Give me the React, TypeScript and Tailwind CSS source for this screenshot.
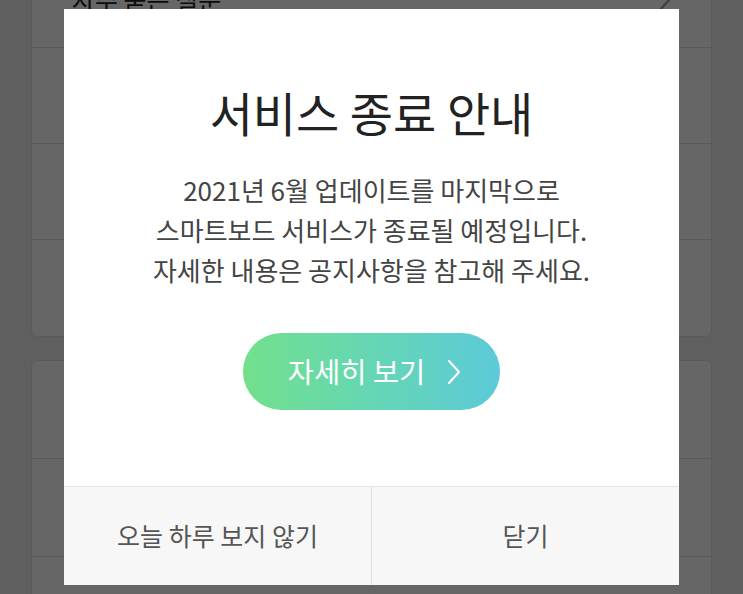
const topRows = ['자주 묻는 질문', '이용 안내', '문의하기', '버전 정보'];
const bottomRows = ['알림 설정', '이용약관', '프라이버시 정책'];

function Chevron({ className }: { className?: string }) {
  return (
    <svg viewBox="0 0 14 28" className={className} fill="none" stroke="currentColor" strokeWidth={2} strokeLinecap="round" strokeLinejoin="round">
      <polyline points="2,3 12,14 2,25" />
    </svg>
  );
}

function Row({ label, tall }: { label: string; tall?: boolean }) {
  return (
    <div
      className={`flex items-center justify-between border-b border-[#e2e2e2] pl-[40px] pr-[40px] last:border-b-0 ${
        tall ? 'h-[98px]' : 'h-[96px]'
      }`}
    >
      <span className="text-[25px] text-[#222]">{label}</span>
      <Chevron className="h-[28px] w-[14px] text-[#999]" />
    </div>
  );
}

export default function App() {
  return (
    <div
      className="relative h-[594px] w-[743px] overflow-hidden bg-[#eeeeee]"
      style={{ fontFamily: '"Noto Sans CJK KR", "Noto Sans", sans-serif' }}
    >
      {/* Page behind the dialog */}
      <div className="mt-[-49px] flex flex-col gap-[23px] px-[31px]">
        <div className="rounded-md border border-[#e2e2e2] bg-white">
          {topRows.map((r) => (
            <Row key={r} label={r} />
          ))}
        </div>
        <div className="rounded-md border border-[#e2e2e2] bg-white">
          {bottomRows.map((r) => (
            <Row key={r} label={r} tall />
          ))}
        </div>
      </div>

      {/* Dimmed backdrop + dialog */}
      <div className="absolute inset-0 flex items-center justify-center bg-black/60">
        <div className="flex h-[576px] w-[615px] flex-col bg-white">
          <h1 className="mt-[77px] text-center text-[47px] font-normal leading-[52px] text-[#222]">
            서비스 종료 안내
          </h1>
          <p className="mt-[32px] text-center text-[26px] leading-[40px] text-[#444]">
            2021년 6월 업데이트를 마지막으로
            <br />
            스마트보드 서비스가 종료될 예정입니다.
            <br />
            자세한 내용은 공지사항을 참고해 주세요.
          </p>
          <div className="mt-[43px] flex justify-center">
            <button className="flex h-[77px] w-[257px] items-center justify-center gap-[22px] rounded-full bg-gradient-to-r from-[#72e08a] to-[#5ccad8] pl-[6px] text-[28.5px] text-white">
              <span>자세히 보기</span>
              <Chevron className="h-[28px] w-[14px]" />
            </button>
          </div>
          <div className="mt-auto flex h-[99px] border-t border-[#e4e4e4] bg-[#f7f7f7]">
            <button className="flex-1 border-r border-[#e2e2e2] text-[25px] text-[#555]">
              오늘 하루 보지 않기
            </button>
            <button className="flex-1 text-[25px] text-[#555]">닫기</button>
          </div>
        </div>
      </div>
    </div>
  );
}
